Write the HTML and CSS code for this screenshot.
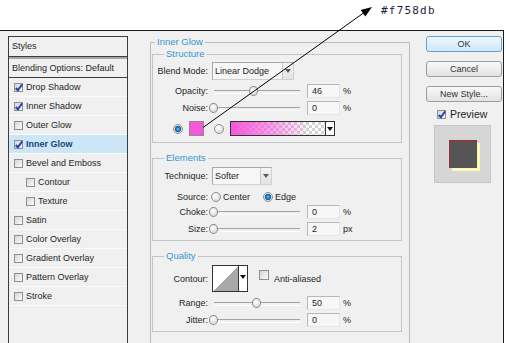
FILE: index.html
```html
<!DOCTYPE html>
<html lang="en">
<head>
	<meta charset="UTF-8">
	<title>Layer Style - Inner Glow</title>
	<link rel="stylesheet" href="styles.css">
</head>
<body>
	<div class="page">
		<div class="note">#f758db</div>

		<div class="dialog">
			<div class="styles">
				<div class="styles_head">Styles</div>
				<div class="styles_blend">Blending Options: Default</div>
				<ul class="styles_list">
					<li><span class="cb cb_on"></span>Drop Shadow</li>
					<li><span class="cb cb_on"></span>Inner Shadow</li>
					<li><span class="cb"></span>Outer Glow</li>
					<li class="styles_current"><span class="cb cb_on"></span>Inner Glow</li>
					<li><span class="cb"></span>Bevel and Emboss</li>
					<li class="styles_sub"><span class="cb"></span>Contour</li>
					<li class="styles_sub"><span class="cb"></span>Texture</li>
					<li><span class="cb"></span>Satin</li>
					<li><span class="cb"></span>Color Overlay</li>
					<li><span class="cb"></span>Gradient Overlay</li>
					<li><span class="cb"></span>Pattern Overlay</li>
					<li><span class="cb"></span>Stroke</li>
				</ul>
			</div>

			<fieldset class="frame">
				<legend>Inner Glow</legend>

				<fieldset class="group group_structure">
					<legend>Structure</legend>
					<div class="row row_select">
						<span class="lbl">Blend Mode:</span>
						<div class="select select_blend"><span>Linear Dodge</span><i></i></div>
					</div>
					<div class="row">
						<span class="lbl">Opacity:</span>
						<div class="slider"><b style="left:46%"></b></div>
						<div class="num">46</div>
						<span class="unit">%</span>
					</div>
					<div class="row">
						<span class="lbl">Noise:</span>
						<div class="slider"><b style="left:0%"></b></div>
						<div class="num">0</div>
						<span class="unit">%</span>
					</div>
					<div class="row row_color">
						<span class="radio radio_on"></span>
						<span class="swatch"></span>
						<span class="radio radio_gap"></span>
						<div class="grad"><span class="grad_fill"></span><i></i></div>
					</div>
				</fieldset>

				<fieldset class="group group_elements">
					<legend>Elements</legend>
					<div class="row row_select">
						<span class="lbl">Technique:</span>
						<div class="select select_tech"><span>Softer</span><i></i></div>
					</div>
					<div class="row row_source">
						<span class="lbl">Source:</span>
						<span class="radio"></span>
						<span class="opt">Center</span>
						<span class="radio radio_on radio_edge"></span>
						<span class="opt">Edge</span>
					</div>
					<div class="row">
						<span class="lbl">Choke:</span>
						<div class="slider"><b style="left:0%"></b></div>
						<div class="num">0</div>
						<span class="unit">%</span>
					</div>
					<div class="row">
						<span class="lbl">Size:</span>
						<div class="slider"><b style="left:0%"></b></div>
						<div class="num">2</div>
						<span class="unit">px</span>
					</div>
				</fieldset>

				<fieldset class="group group_quality">
					<legend>Quality</legend>
					<div class="row row_contour">
						<span class="lbl">Contour:</span>
						<div class="contour"><span class="contour_curve"></span><i></i></div>
						<span class="cb cb_lg"></span>
						<span class="opt">Anti-aliased</span>
					</div>
					<div class="row">
						<span class="lbl">Range:</span>
						<div class="slider"><b style="left:50%"></b></div>
						<div class="num">50</div>
						<span class="unit">%</span>
					</div>
					<div class="row">
						<span class="lbl">Jitter:</span>
						<div class="slider"><b style="left:0%"></b></div>
						<div class="num">0</div>
						<span class="unit">%</span>
					</div>
				</fieldset>
			</fieldset>

			<div class="side">
				<div class="btn btn_ok">OK</div>
				<div class="btn">Cancel</div>
				<div class="btn">New Style...</div>
				<div class="preview_check"><span class="cb cb_on"></span>Preview</div>
				<div class="preview_box"><div class="preview_swatch"></div></div>
			</div>
		</div>

		<svg class="pointer" width="506" height="343" viewBox="0 0 506 343">
			<line x1="203" y1="127.5" x2="363.5" y2="13" stroke="#000" stroke-width="1"/>
			<polygon points="372,7 365.3,16.6 360.7,10.1" fill="#000"/>
		</svg>
	</div>
</body>
</html>
```

FILE: styles.css
```css
*{
	margin:0;
	padding:0;
	box-sizing:border-box;
}

ul{
	list-style-type:none;
}

body{
	background-color:#fff;
	font-family:"Liberation Sans", Arial, sans-serif;
	font-size:9px;
	color:#1e1e1e;
}

.page{
	position:relative;
	width:506px;
	height:343px;
	overflow:hidden;
}

.note{
	height:30px;
	padding:4px 0 0 381px;
	font-family:"DejaVu Sans Mono", "Liberation Mono", monospace;
	font-size:11px;
	line-height:14px;
	letter-spacing:1.2px;
	color:#1d1d3a;
}

.dialog{
	display:flex;
	align-items:flex-start;
	width:504px;
	height:313px;
	background-color:#f0f0f0;
	border-top:solid 1px #1b1b1b;
	border-right:solid 1px #1b1b1b;
	overflow:hidden;
}

/* left list */
.styles{
	flex:none;
	width:120px;
	height:320px;
	margin:5px 0 0 8px;
	border:solid 1px #3c3c3c;
}
.styles_head{
	height:20px;
	line-height:19px;
	padding-left:3px;
	border-bottom:solid 1px #3c3c3c;
}
.styles_blend{
	height:21px;
	line-height:18px;
	padding-left:3px;
	border-top:solid 2px #a6a6a6;
	border-bottom:solid 1px #3c3c3c;
}
.styles_list li{
	display:flex;
	align-items:center;
	height:19px;
	padding-left:5px;
	border-bottom:solid 1px #fbfbfb;
}
.styles_list .styles_sub{
	padding-left:17px;
}
.styles_list .styles_current{
	background-color:#cbe7f7;
	color:#1b3f7c;
	font-weight:bold;
}

/* checkbox / radio */
.cb{
	flex:none;
	position:relative;
	width:9px;
	height:9px;
	margin-right:3px;
	border:solid 1px #8e8f8f;
	background:linear-gradient(135deg,#d6d6d6,#fbfbfb);
}
.cb_lg{
	width:10px;
	height:10px;
	margin-left:11px;
	align-self:flex-start;
	margin-top:5px;
}
.cb_on::after{
	content:"";
	position:absolute;
	left:2px;
	top:-1px;
	width:2px;
	height:6px;
	border-right:solid 2px #2a45b0;
	border-bottom:solid 2px #2a45b0;
	transform:rotate(38deg);
}
.radio{
	flex:none;
	width:10px;
	height:10px;
	border-radius:50%;
	border:solid 1px #8d8d8d;
	background:radial-gradient(circle at 40% 35%,#fff,#d2d2d2);
}
.radio_on{
	background:radial-gradient(circle,#8ad6ff 0,#1f86d3 1.5px,#0f5a9c 2.8px,#dcdcdc 3.4px,#fdfdfd);
}

/* group boxes */
fieldset{
	border:solid 1px #bdbdbd;
	min-width:0;
}
legend{
	padding:0 2px;
	line-height:12px;
	font-size:9.5px;
	color:#3597cf;
}
.frame{
	flex:none;
	width:260px;
	height:330px;
	margin:5px 0 0 22px;
}
.frame > legend{
	margin-left:4px;
}
.group{
	margin:0 7px 0 1px;
	border-color:#c4c4c4;
}
.group legend{
	margin-left:11px;
}
.group_structure{
	padding:2px 0 6px;
}
.group_elements,
.group_quality{
	margin-top:9px;
	padding:3px 0 4px;
}

/* rows */
.row{
	display:flex;
	align-items:center;
	height:14px;
	margin-top:3px;
}
.row.row_select{
	height:18px;
	margin-top:0;
}
.row_select + .row{
	margin-top:4px;
}
.row.row_color{
	height:15px;
	margin-top:6px;
	padding-left:20px;
}
.row.row_source{
	height:10px;
	margin-top:7px;
}
.row.row_contour{
	height:27px;
	margin-top:0;
}
.row_contour + .row{
	margin-top:4px;
}
.lbl{
	flex:none;
	width:55px;
	margin-right:4px;
	text-align:right;
	white-space:nowrap;
}
.row_source .lbl{
	margin-right:3px;
}
.opt{
	margin-left:2px;
	white-space:nowrap;
}
.radio_edge{
	margin-left:13px;
}

.select{
	display:flex;
	height:18px;
	border:solid 1px;
	border-color:#a9a9a9 #d0d0d0 #d0d0d0 #a9a9a9;
	background-color:#f6f6f6;
}
.select span{
	flex:1;
	padding-left:2px;
	line-height:16px;
}
.select i,
.grad i,
.contour i{
	display:flex;
	align-items:center;
	justify-content:center;
	width:11px;
	border-left:solid 1px #c8c8c8;
	background:linear-gradient(#f4f4f4,#e2e2e2);
}
.select i::after,
.grad i::after,
.contour i::after{
	content:"";
	border-left:solid 3px transparent;
	border-right:solid 3px transparent;
	border-top:solid 4px #5a5a5a;
}
.select_blend{
	width:82px;
}
.select_tech{
	width:60px;
}

.slider{
	flex:none;
	position:relative;
	width:86px;
	height:10px;
	margin-left:2px;
}
.slider::before{
	content:"";
	position:absolute;
	left:0;
	right:0;
	top:4px;
	height:2px;
	border-top:solid 1px #a3a3a3;
	border-bottom:solid 1px #fff;
}
.slider b{
	position:absolute;
	top:0;
	width:9px;
	height:10px;
	margin-left:-5px;
	border-radius:50%;
	border:solid 1px #8a8a8a;
	background:radial-gradient(circle at 40% 35%,#fff,#d0d0d0);
}
.num{
	flex:none;
	width:33px;
	height:14px;
	margin-left:7px;
	padding-left:4px;
	line-height:12px;
	border:solid 1px;
	border-color:#b8b8b8 #e6e6e6 #e6e6e6 #b8b8b8;
	background-color:#f7f7f7;
}
.unit{
	margin-left:3px;
}

.swatch{
	flex:none;
	width:15px;
	height:15px;
	margin-left:6px;
	border:solid 1px #8c8c8c;
	background-color:#f758db;
}
.radio_gap{
	margin-left:10px;
}
.grad{
	flex:none;
	display:flex;
	width:105px;
	height:15px;
	margin-left:6px;
	border:solid 1px #333;
}
.grad_fill{
	flex:1;
	background:
		linear-gradient(to right,#f758db,rgba(247,88,219,0.55) 45%,rgba(247,88,219,0) 85%),
		repeating-conic-gradient(#d4d4d4 0 25%,#fff 0 50%) 0 0/6px 6px;
}
.grad i,
.contour i{
	width:9px;
	border-left-color:#333;
	background:#fff;
}
.grad i::after,
.contour i::after{
	border-top-color:#111;
}

.contour{
	flex:none;
	display:flex;
	width:36px;
	height:27px;
	border:solid 1px #333;
}
.contour_curve{
	flex:1;
	background:linear-gradient(to bottom right,#fff 50%,#a9a9ac 50%);
}
.contour i{
	align-items:flex-start;
	padding-top:9px;
}

/* right column */
.side{
	flex:none;
	width:76px;
	margin:5px 0 0 16px;
}
.btn{
	height:16px;
	line-height:14px;
	text-align:center;
	color:#333;
	border:solid 1px #9d9d9d;
	border-radius:3px;
	background:linear-gradient(#f9f9f9,#e2e2e2);
}
.btn + .btn{
	margin-top:9px;
}
.btn_ok{
	border-color:#5fa3d7;
	background:linear-gradient(#eef8fe,#cfe8f9);
}
.preview_check{
	display:flex;
	align-items:center;
	height:10px;
	margin:7px 0 0 11px;
	font-size:10.5px;
}
.preview_check .cb{
	margin-right:4px;
}
.preview_box{
	width:57px;
	height:58px;
	margin:6px 0 0 8px;
	padding:14px 0 0 14px;
	border:solid 1px #c6c6c6;
	background-color:#d6d6d6;
}
.preview_swatch{
	width:28px;
	height:28px;
	background-color:#555;
	border-top:solid 1px #b3203a;
	border-left:solid 1px #b3203a;
	box-shadow:3px 3px 0 #fdfbb3;
}

.pointer{
	position:absolute;
	top:0;
	left:0;
	pointer-events:none;
}
```
